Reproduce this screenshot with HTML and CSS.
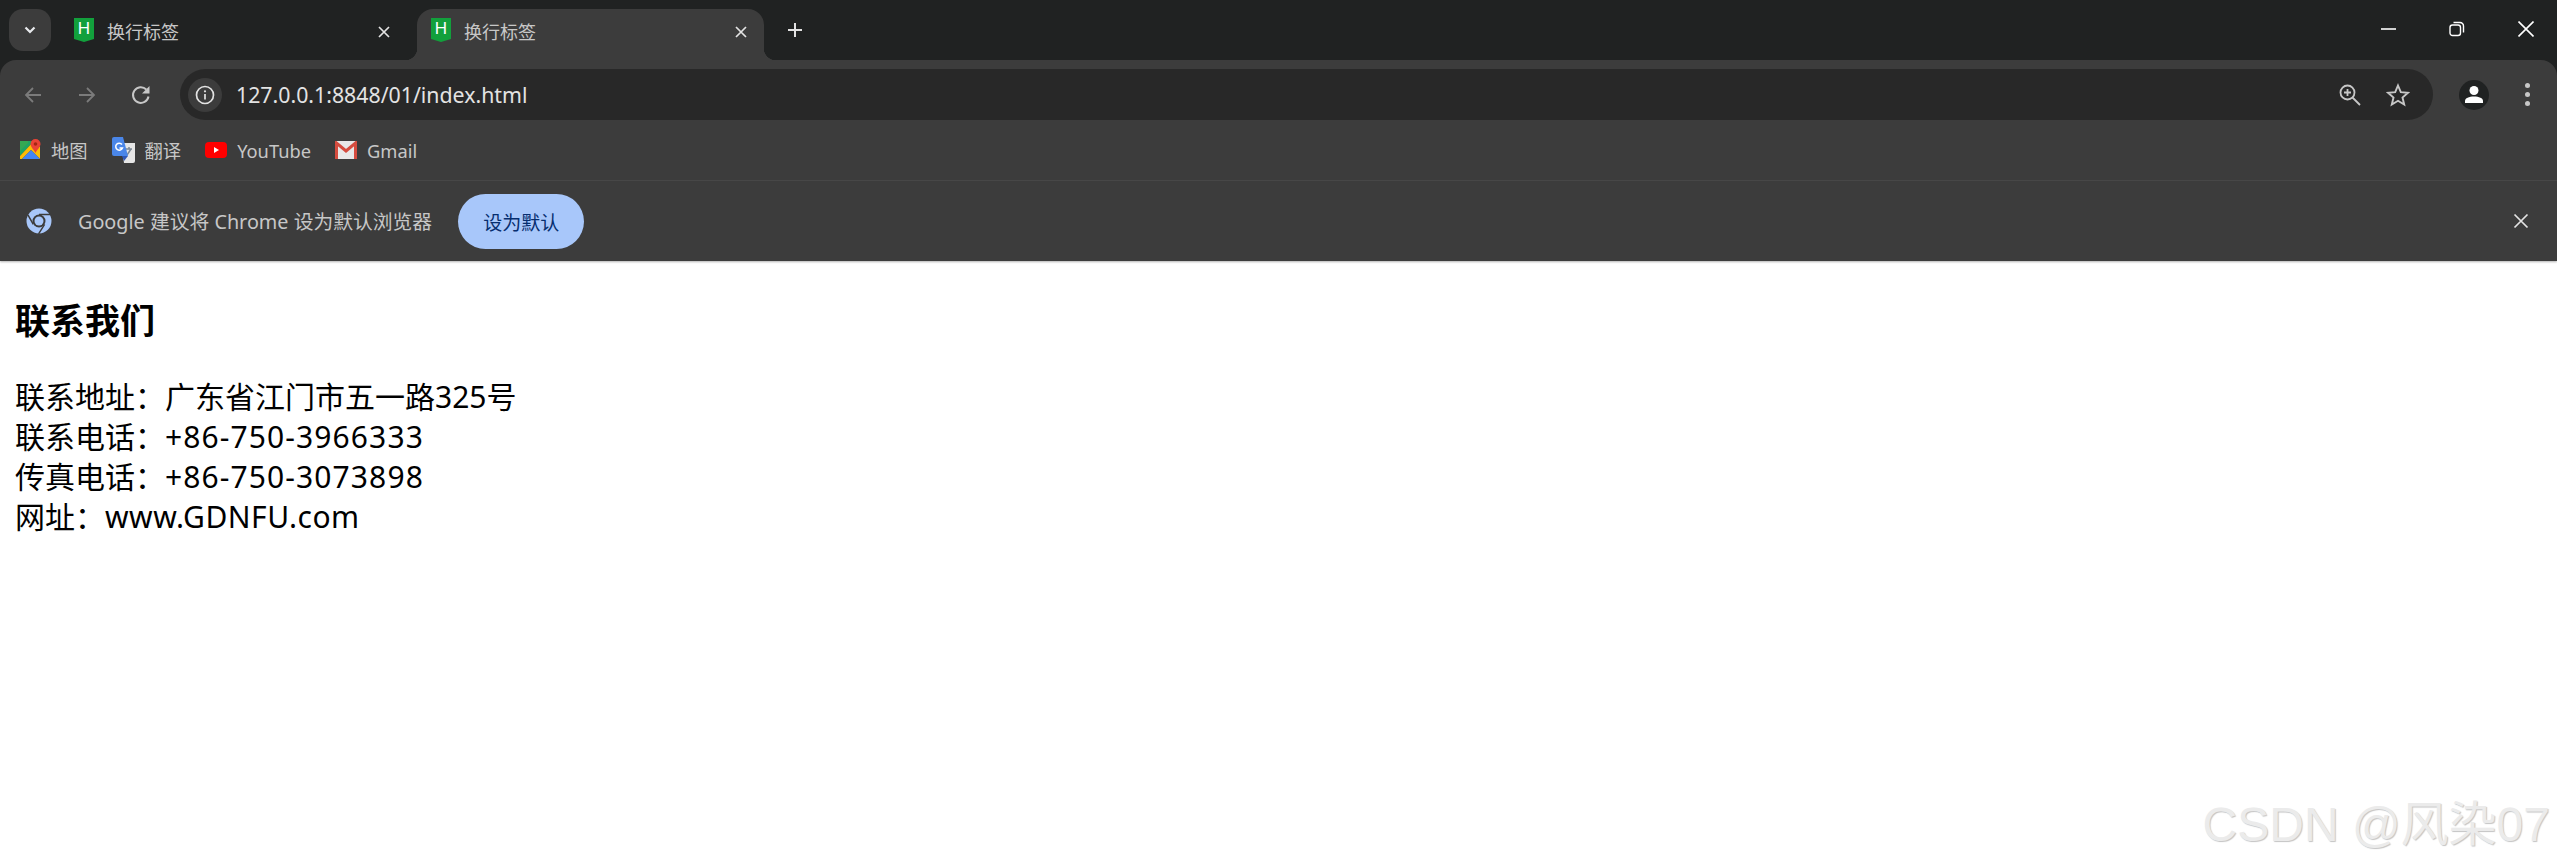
FILE: index.html
```html
<!DOCTYPE html>
<html lang="zh-CN">
<head>
    <meta charset="UTF-8">
    <title>换行标签</title>
    <link rel="stylesheet" href="styles.css">
</head>
<body>
    <div class="browser">
        <div class="tabstrip">
            <button class="tab-search">
                <svg width="14" height="14" viewBox="0 0 14 14"><path d="M2.5 4.5 7 9l4.5-4.5" fill="none" stroke="#e8eaed" stroke-width="2.2"/></svg>
            </button>
            <div class="tab">
                <span class="favicon">H</span>
                <span class="tab-title">换行标签</span>
                <svg class="tab-close" width="12" height="12" viewBox="0 0 12 12"><path d="M1 1l10 10M11 1 1 11" stroke="#e3e3e3" stroke-width="1.7"/></svg>
            </div>
            <div class="tab active">
                <span class="favicon">H</span>
                <span class="tab-title">换行标签</span>
                <svg class="tab-close" width="12" height="12" viewBox="0 0 12 12"><path d="M1 1l10 10M11 1 1 11" stroke="#e3e3e3" stroke-width="1.7"/></svg>
            </div>
            <svg class="new-tab" width="16" height="16" viewBox="0 0 16 16"><path d="M8 1v14M1 8h14" stroke="#e3e3e3" stroke-width="2"/></svg>
            <div class="win-controls">
                <svg width="16" height="16" viewBox="0 0 16 16"><path d="M1 8h15" stroke="#fff" stroke-width="1.6"/></svg>
                <svg width="16" height="16" viewBox="0 0 16 16"><rect x="1" y="4" width="10.5" height="10.5" rx="2.5" fill="none" stroke="#fff" stroke-width="1.4"/><path d="M4.5 1.5h6.5a3.5 3.5 0 0 1 3.5 3.5v6.5" fill="none" stroke="#fff" stroke-width="1.4"/></svg>
                <svg width="16" height="16" viewBox="0 0 16 16"><path d="M.5.5l15 15M15.500.5l-15 15" stroke="#fff" stroke-width="1.6"/></svg>
            </div>
        </div>

        <div class="toolbar">
            <div class="nav-row">
                <div class="nav-btn">
                    <svg width="20" height="20" viewBox="0 0 20 20"><path d="M18 10H3M10 3l-7 7 7 7" fill="none" stroke="#7b7b7b" stroke-width="1.8"/></svg>
                </div>
                <div class="nav-btn">
                    <svg width="20" height="20" viewBox="0 0 20 20"><path d="M2 10h15M10 3l7 7-7 7" fill="none" stroke="#7b7b7b" stroke-width="1.8"/></svg>
                </div>
                <div class="nav-btn">
                    <svg width="20" height="20" viewBox="0 0 20 20"><path d="M17.500 11.500a7.800 7.800 0 1 1-2.200-7" fill="none" stroke="#c7c7c7" stroke-width="2"/><path d="M18.500 1v7.500H11z" fill="#c7c7c7"/></svg>
                </div>
                <div class="omnibox">
                    <div class="site-info">
                        <svg width="20" height="20" viewBox="0 0 20 20"><circle cx="10" cy="10" r="8.500" fill="none" stroke="#e3e3e3" stroke-width="1.700"/><path d="M10 9v5.500" stroke="#e3e3e3" stroke-width="1.700"/><circle cx="10" cy="6.300" r="1.100" fill="#e3e3e3"/></svg>
                    </div>
                    <span class="url">127.0.0.1:8848/01/index.html</span>
                    <div class="omni-actions">
                        <svg width="22" height="22" viewBox="0 0 22 22"><circle cx="8.500" cy="8.500" r="7" fill="none" stroke="#c7c7c7" stroke-width="1.800"/><path d="M13.500 13.500 21 21" stroke="#c7c7c7" stroke-width="1.800"/><path d="M8.500 5v7M5 8.500h7" stroke="#c7c7c7" stroke-width="1.800"/></svg>
                        <svg width="24" height="24" viewBox="0 0 24 24"><path d="M12 2.500l2.800 6.700 7.200.6-5.500 4.700 1.700 7.100L12 17.800l-6.200 3.800 1.700-7.100L2 9.800l7.200-.6z" fill="none" stroke="#c7c7c7" stroke-width="1.900"/></svg>
                    </div>
                </div>
                <div class="avatar">
                    <svg width="20" height="20" viewBox="0 0 20 20"><circle cx="10" cy="5.500" r="4.500" fill="#fff"/><path d="M1 18v-2c0-3 4-4.500 9-4.500s9 1.500 9 4.500v2z" fill="#fff"/></svg>
                </div>
                <div class="menu-dots"><i></i><i></i><i></i></div>
            </div>

            <div class="bookmarks">
                <a class="bookmark">
                    <svg width="21" height="22" viewBox="0 0 21 22"><path d="M0 2h14L0 17z" fill="#1fa463"/><path d="M0 17 14 2l6 6v12L11 11 2 20H0z" fill="#fbbc04"/><path d="M11 11l9 9H2z" fill="#4285f4"/><path d="M8 4 0 12V2h8z" fill="#34a853"/><path d="M15.500 0a5 5 0 0 1 5 5c0 3-3 5-5 9-2-4-5-6-5-9a5 5 0 0 1 5-5z" fill="#ea4335"/><circle cx="15.500" cy="5" r="1.800" fill="#a52714"/></svg>
                    地图
                </a>
                <a class="bookmark">
                    <svg width="23" height="27" viewBox="0 0 23 27"><path d="M9 6h14v18a2 2 0 0 1-2 2H12z" fill="#e6e6e6"/><path d="M14 12h6M17 10v2M15 18l4-6" stroke="#7b8794" stroke-width="1.500" fill="none"/><path d="M2 0h9l5 19H2a2 2 0 0 1-2-2V2a2 2 0 0 1 2-2z" fill="#4a86e8"/><path d="M10 19h6l-4 5z" fill="#2f57b5"/><path d="M10 7.500A3.500 3.500 0 1 0 10.500 11H7.500" fill="none" stroke="#fff" stroke-width="1.500"/></svg>
                    翻译
                </a>
                <a class="bookmark">
                    <svg width="22" height="16" viewBox="0 0 22 16"><rect width="22" height="16" rx="4" fill="#f00"/><path d="M9 5l5 3-5 3z" fill="#fff"/></svg>
                    YouTube
                </a>
                <a class="bookmark">
                    <svg width="22" height="18" viewBox="0 0 22 18"><rect width="22" height="18" rx="1.500" fill="#e8e8e8"/><path d="M1.500 18V2l9.500 8 9.500-8v16" fill="none" stroke="#d54c3f" stroke-width="3"/></svg>
                    Gmail
                </a>
            </div>
        </div>

        <div class="infobar">
            <svg class="chrome-icon" width="26" height="26" viewBox="0 0 26 26">
                <circle cx="13" cy="13" r="12.500" fill="#a8c7fa"/>
                <circle cx="13" cy="13" r="6.500" fill="#3c3c3c"/>
                <circle cx="13" cy="13" r="4.500" fill="#a8c7fa"/>
                <path d="M13 6.500h11.500M7.300 16.300 1.900 6.800M18.600 16.300 12.600 25.800" stroke="#3c3c3c" stroke-width="1.500"/>
            </svg>
            <span class="info-text">Google 建议将 Chrome 设为默认浏览器</span>
            <button class="set-default">设为默认</button>
            <svg class="info-close" width="16" height="16" viewBox="0 0 16 16"><path d="M1.500 1.500l13 13M14.500 1.500l-13 13" stroke="#e3e3e3" stroke-width="1.700"/></svg>
        </div>
    </div>

    <div class="content">
        <h3>联系我们</h3>
        <p>
            联系地址：广东省江门市五一路325号<br>
            联系电话：<span class="phone">+86-750-3966333</span><br>
            传真电话：<span class="phone">+86-750-3073898</span><br>
            网址：<span class="site">www.GDNFU.com</span>
        </p>
    </div>

    <div class="watermark">CSDN @风染07</div>
</body>
</html>
```

FILE: styles.css
```css
html, body {
    margin: 0;
    padding: 0;
    height: 100%;
    overflow: hidden;
}
body {
    position: relative;
    background: white;
    font-family: "Noto Sans", "Noto Sans CJK SC", sans-serif;
    color: black;
}
svg {
    display: block;
    flex: none;
}

/* browser chrome */
.browser {
    position: relative;
    background: #202222;
    box-shadow: 0 1px 2px rgba(0, 0, 0, 0.3);
}
.tabstrip {
    height: 60px;
    display: flex;
    align-items: flex-start;
    padding: 9px 23px 0 9px;
    box-sizing: border-box;
}
.tab-search {
    width: 42px;
    height: 42px;
    padding: 0;
    border: none;
    border-radius: 14px;
    background: #3c3c3c;
    display: flex;
    align-items: center;
    justify-content: center;
    margin-right: 9px;
}
.tab {
    position: relative;
    width: 347px;
    height: 51px;
    margin-right: 10px;
    padding: 9px 17px 0 14px;
    box-sizing: border-box;
    display: flex;
    align-items: flex-start;
    border-radius: 16px 16px 0 0;
}
.tab.active {
    background: #3c3c3c;
}
.tab.active::before,
.tab.active::after {
    content: "";
    position: absolute;
    bottom: 0;
    width: 12px;
    height: 12px;
}
.tab.active::before {
    left: -12px;
    background: radial-gradient(circle at 0 0, transparent 12px, #3c3c3c 12.500px);
}
.tab.active::after {
    right: -12px;
    background: radial-gradient(circle at 100% 0, transparent 12px, #3c3c3c 12.500px);
}
.favicon {
    width: 20px;
    height: 24px;
    background: #12a03c;
    color: white;
    font-family: "Liberation Sans", sans-serif;
    font-size: 17px;
    line-height: 22px;
    text-align: center;
    clip-path: polygon(0 0, 100% 0, 100% 88%, 50% 100%, 0 88%);
}
.tab-title {
    margin-left: 13px;
    font-family: "Noto Sans CJK SC", sans-serif;
    font-size: 18px;
    line-height: 26px;
    color: #c7c7c7;
}
.tab-close {
    margin-left: auto;
    margin-top: 8px;
}
.new-tab {
    margin: 13px 0 0 13px;
}
.win-controls {
    margin-left: auto;
    margin-top: 12px;
    display: flex;
    gap: 53px;
}
.toolbar {
    background: #3c3c3c;
    border-radius: 16px 16px 0 0;
    height: 120px;
    box-sizing: border-box;
}
.nav-row {
    display: flex;
    align-items: center;
    height: 51px;
    padding: 9px 0 9px 6px;
}
.nav-btn {
    width: 54px;
    display: flex;
    justify-content: center;
}
.omnibox {
    width: 2253px;
    height: 51px;
    margin-left: 12px;
    background: #282828;
    border-radius: 26px;
    display: flex;
    align-items: center;
    padding: 0 23px 0 8px;
    box-sizing: border-box;
}
.site-info {
    width: 34px;
    height: 34px;
    border-radius: 50%;
    background: #3c3c3c;
    display: flex;
    align-items: center;
    justify-content: center;
}
.url {
    margin-left: 14px;
    font-size: 21.300px;
    color: #e3e3e3;
}
.omni-actions {
    margin-left: auto;
    display: flex;
    align-items: center;
    gap: 25px;
}
.avatar {
    width: 30px;
    height: 30px;
    margin-left: 26px;
    border-radius: 50%;
    background: #202222;
    display: flex;
    align-items: center;
    justify-content: center;
}
.menu-dots {
    margin-left: 36px;
    display: flex;
    flex-direction: column;
    gap: 4px;
}
.menu-dots i {
    display: block;
    width: 5px;
    height: 5px;
    border-radius: 50%;
    background: #c7c7c7;
}
.bookmarks {
    display: flex;
    align-items: center;
    height: 42px;
    padding-left: 20px;
    gap: 24px;
}
.bookmark {
    display: flex;
    align-items: center;
    gap: 10px;
    font-family: "Noto Sans", "Noto Sans CJK SC", sans-serif;
    font-size: 18.300px;
    color: #c7c7c7;
}
.infobar {
    height: 81px;
    border-top: 1px solid #474747;
    box-sizing: border-box;
    background: #3c3c3c;
    display: flex;
    align-items: center;
    padding: 0 28px 0 26px;
}
.info-text {
    margin: 0 0 2px 26px;
    font-family: "Noto Sans", "Noto Sans CJK SC", sans-serif;
    font-size: 19.800px;
    color: #c7c7c7;
}
.set-default {
    width: 126px;
    height: 55px;
    margin-left: 26px;
    padding: 0;
    border: none;
    border-radius: 28px;
    background: #a8c7fa;
    color: #062e6f;
    font-family: "Noto Sans CJK SC", sans-serif;
    font-size: 19px;
}
.info-close {
    margin-left: auto;
}

/* page body */
.content {
    padding: 0 15px;
}
.content h3 {
    margin: 37px 0 0;
    font-family: "Noto Sans CJK SC", sans-serif;
    font-size: 35px;
    line-height: 42px;
    font-weight: bold;
}
.content p {
    margin: 37px 0 0;
    font-size: 30px;
    line-height: 40px;
}
.phone {
    letter-spacing: 1.100px;
}
.site {
    letter-spacing: 0.500px;
}

/* overlaid image watermark */
.watermark {
    position: absolute;
    right: 7px;
    bottom: 16px;
    font-family: "Liberation Sans", "Noto Sans CJK SC", sans-serif;
    font-size: 48px;
    line-height: 54px;
    color: #ebebeb;
    text-shadow: 1px 1px 1px #c4c4c4;
}
```
